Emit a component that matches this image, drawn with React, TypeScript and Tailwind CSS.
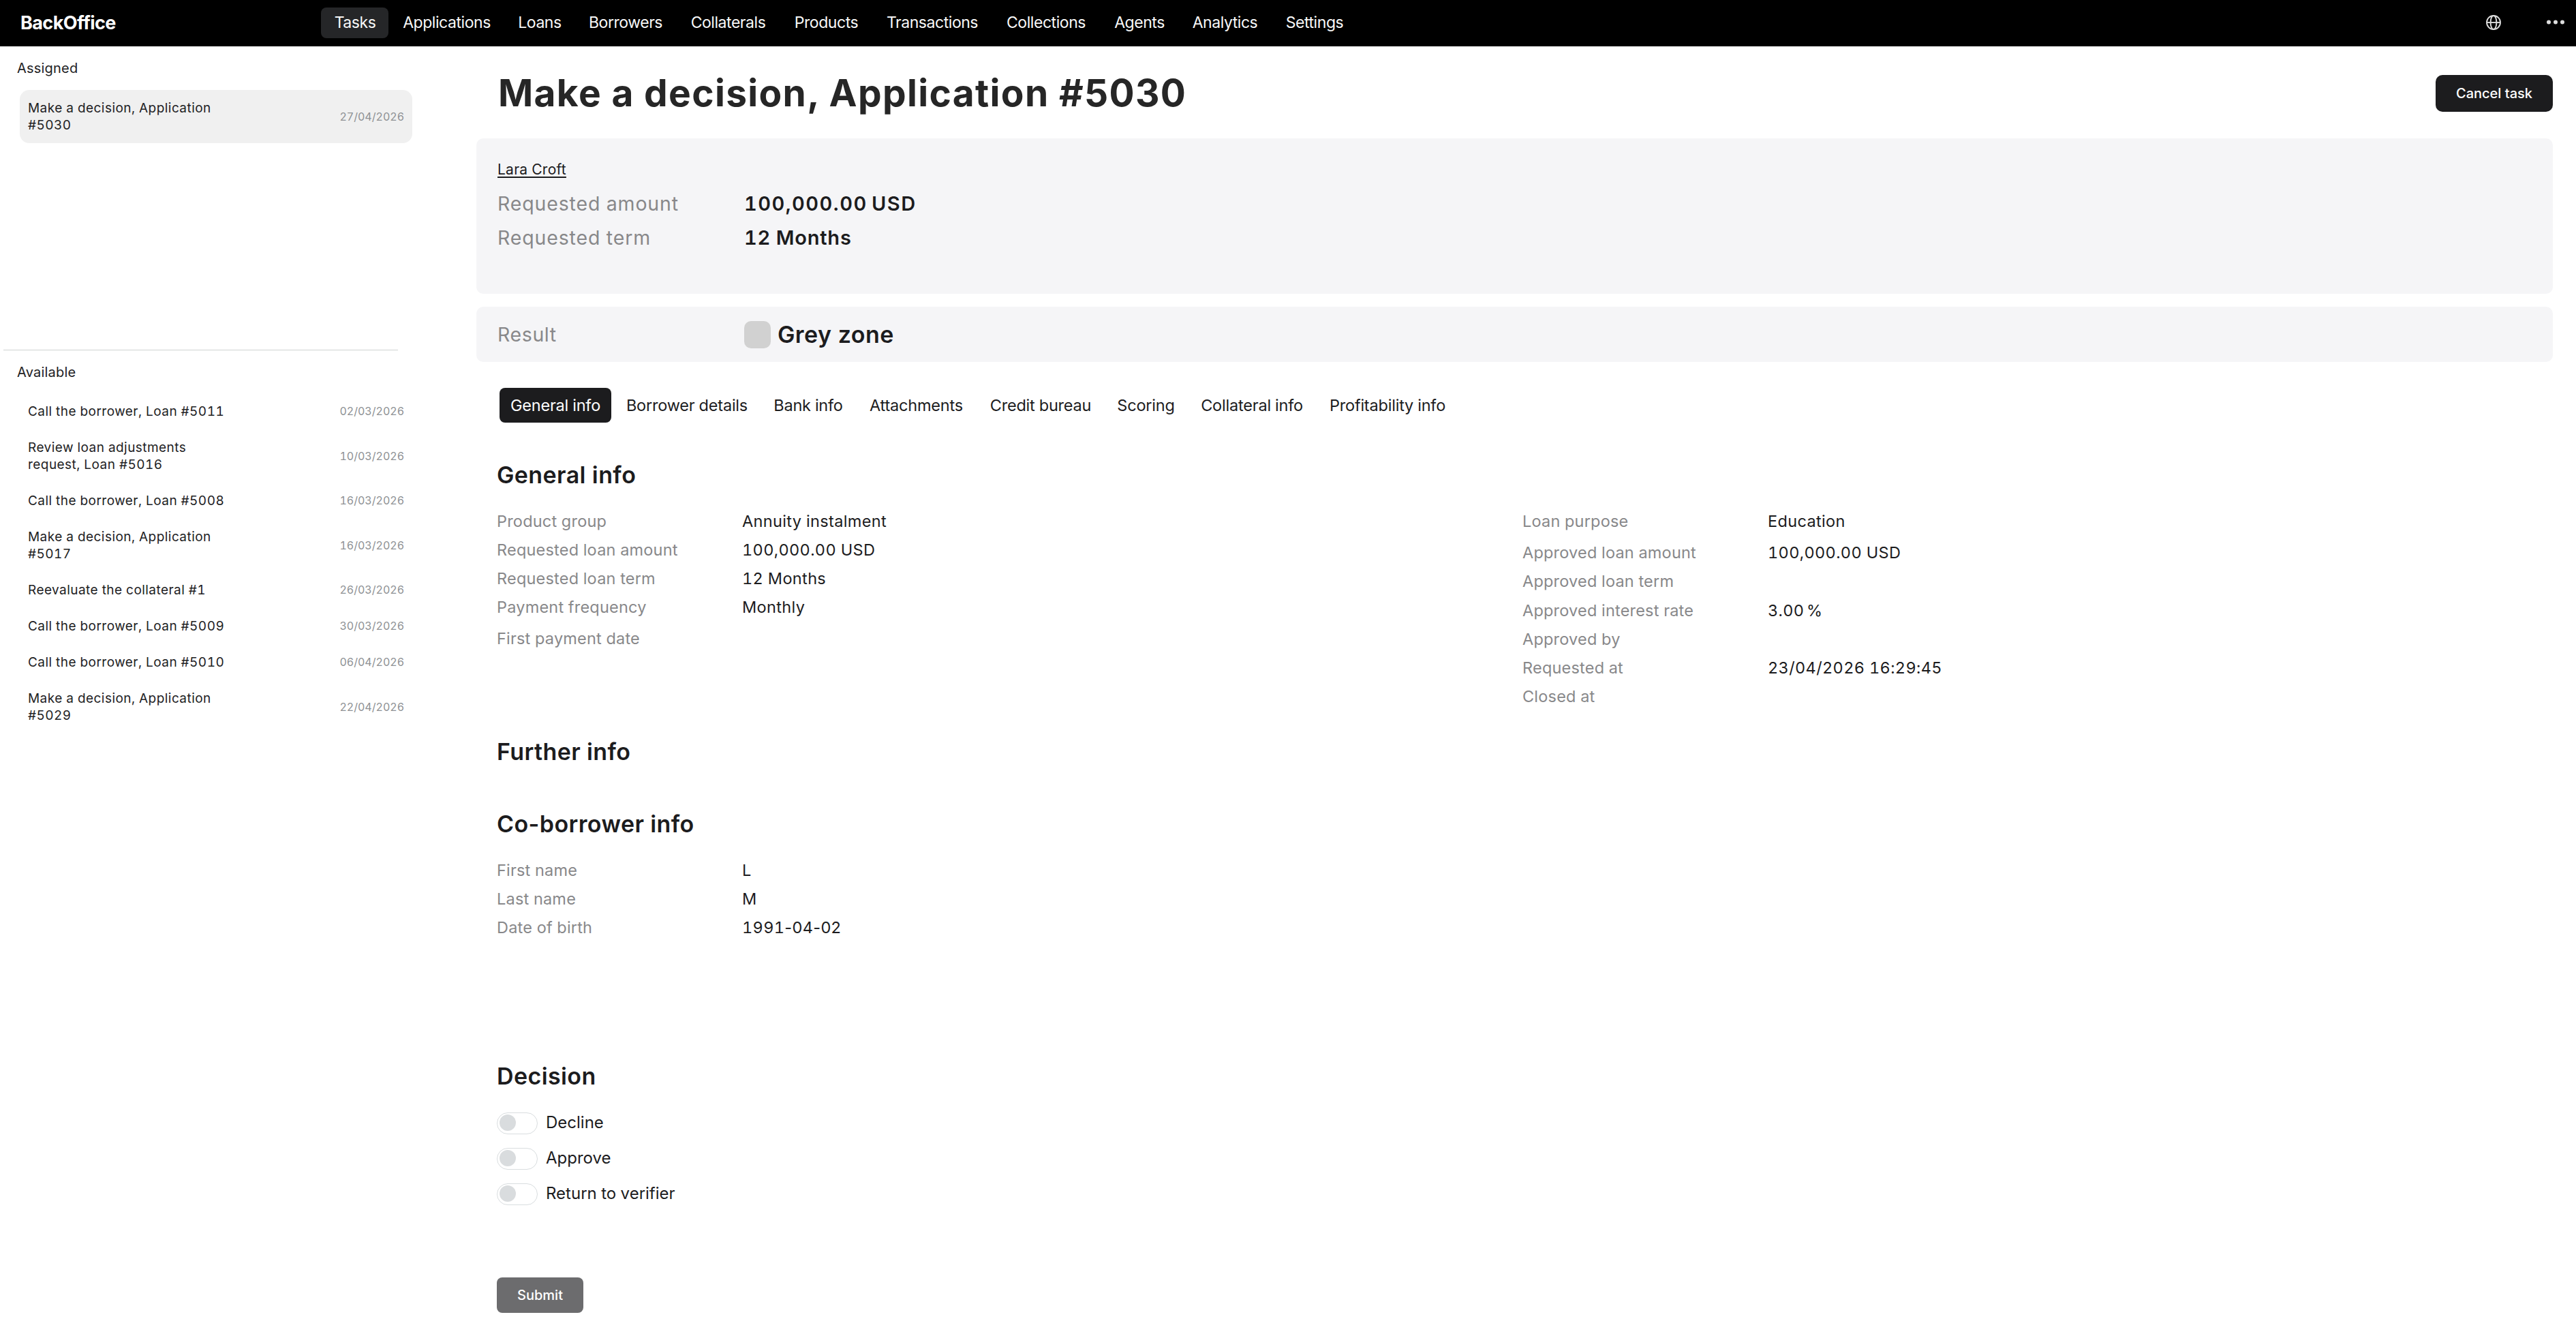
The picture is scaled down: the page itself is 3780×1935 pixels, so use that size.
import React, { useState } from "react";
import clsx from "clsx";

const navItems = [
  { label: "Tasks", width: "w-[99px]" },
  { label: "Applications", width: "w-[170px]" },
  { label: "Loans", width: "w-[103px]" },
  { label: "Borrowers", width: "w-[149px]" },
  { label: "Collaterals", width: "w-[152px]" },
  { label: "Products", width: "w-[136px]" },
  { label: "Transactions", width: "w-[175px]" },
  { label: "Collections", width: "w-[159px]" },
  { label: "Agents", width: "w-[115px]" },
  { label: "Analytics", width: "w-[136px]" },
  { label: "Settings", width: "w-[127px]" },
];

const assignedTasks = [
  { title: "Make a decision, Application #5030", date: "27/04/2026" },
];

const availableTasks = [
  { title: "Call the borrower, Loan #5011", date: "02/03/2026" },
  { title: "Review loan adjustments request, Loan #5016", date: "10/03/2026" },
  { title: "Call the borrower, Loan #5008", date: "16/03/2026" },
  { title: "Make a decision, Application #5017", date: "16/03/2026" },
  { title: "Reevaluate the collateral #1", date: "26/03/2026" },
  { title: "Call the borrower, Loan #5009", date: "30/03/2026" },
  { title: "Call the borrower, Loan #5010", date: "06/04/2026" },
  { title: "Make a decision, Application #5029", date: "22/04/2026" },
];

const tabs = [
  { label: "General info", width: "w-[164px] mr-[2px]" },
  { label: "Borrower details", width: "w-[217px]" },
  { label: "Bank info", width: "w-[139px]" },
  { label: "Attachments", width: "w-[178px]" },
  { label: "Credit bureau", width: "w-[187px]" },
  { label: "Scoring", width: "w-[122px]" },
  { label: "Collateral info", width: "w-[189px]" },
  { label: "Profitability info", width: "w-[209px]" },
];

const decisions = ["Decline", "Approve", "Return to verifier"];

const TaskItem = ({
  title,
  date,
  active,
}: {
  title: string;
  date: string;
  active?: boolean;
}) => (
  <li
    className={clsx(
      "ml-[29px] flex w-[576px] items-center justify-between rounded-[14px] py-[14px] pr-[12px] pl-[12px]",
      active && "bg-[#f0f0f0]",
    )}
  >
    <span className="w-[300px] text-[19px] leading-[25px] tracking-[0.45px] text-[#222224]">
      {title}
    </span>
    <span className="-mt-px text-[16px] leading-5 text-[#8e9194]">{date}</span>
  </li>
);

const Field = ({
  label,
  value,
  className,
}: {
  label: string;
  value?: React.ReactNode;
  className?: string;
}) => (
  <div
    className={clsx(
      "grid h-[42px] grid-cols-[360px_1fr] items-center text-[23.5px]",
      className,
    )}
  >
    <span className="tracking-[0.2px] text-[#88888a]">{label}</span>
    <span className="tracking-[0.35px] text-[#1c1c1e]">{value}</span>
  </div>
);

const SectionTitle = ({
  children,
  className,
}: {
  children: React.ReactNode;
  className?: string;
}) => (
  <h2
    className={clsx(
      "h-[50px] text-[34px] leading-[50px] font-semibold tracking-[0.4px] text-[#1c1c1e] normal-nums",
      className,
    )}
  >
    {children}
  </h2>
);

const Toggle = ({
  label,
  checked,
  onChange,
}: {
  label: string;
  checked: boolean;
  onChange: () => void;
}) => (
  <button
    role="switch"
    aria-checked={checked}
    onClick={onChange}
    className="flex h-8 items-center gap-[12px]"
  >
    <span
      className={clsx(
        "flex h-8 w-[60px] rounded-full border border-[#d9dddf] px-[3px] pt-[2px]",
        checked && "justify-end",
      )}
    >
      <span className="size-6 rounded-full bg-[#d9dcde]" />
    </span>
    <span className="-mt-[2px] text-[24px] leading-[30px] text-[#1c1c1e]">
      {label}
    </span>
  </button>
);

const Navbar = () => (
  <header className="flex h-[68px] items-start bg-black text-[#f8f8f8]">
    <div className="h-[68px] w-[471px] pl-[30px] text-[27px] leading-[67px] font-bold tracking-[-0.6px] text-white">
      BackOffice
    </div>
    <nav className="mt-[11px] flex">
      {navItems.map(({ label, width }, i) => (
        <a
          key={label}
          className={clsx(
            "flex h-[45px] items-center justify-center pl-px text-[23px] tracking-[-0.45px] whitespace-nowrap",
            width,
            i === 0 && "rounded-lg bg-[#252628]",
          )}
        >
          {label}
        </a>
      ))}
    </nav>
    <div className="mt-[22px] ml-auto flex pr-[17px] text-[#dcdcdc]">
      <svg width="22" height="22" viewBox="0 0 22 22" fill="none" stroke="currentColor" strokeWidth="1.9">
        <circle cx="11" cy="11" r="10" />
        <ellipse cx="11" cy="11" rx="4.4" ry="10" />
        <path d="M1 11h20" />
      </svg>
      <svg className="ml-[67px]" width="26" height="22" viewBox="0 0 26 22" fill="currentColor">
        <circle cx="3" cy="10.5" r="3" />
        <circle cx="13" cy="10.5" r="3" />
        <circle cx="23" cy="10.5" r="3" />
      </svg>
    </div>
  </header>
);

const Sidebar = () => (
  <aside className="w-[699px] shrink-0">
    <h3 className="mt-[17px] ml-[25px] h-[30px] text-[20px] leading-[30px] tracking-[0.2px] text-[#222224]">
      Assigned
    </h3>
    <ul className="mt-[17px] h-[381px]">
      {assignedTasks.map((task) => (
        <TaskItem key={task.title} {...task} active />
      ))}
    </ul>
    <div className="ml-[5px] h-px w-[579px] bg-[#cfd3d1]" />
    <h3 className="mt-[17px] ml-[25px] h-[30px] text-[20px] leading-[30px] tracking-[0.2px] text-[#222224]">
      Available
    </h3>
    <ul className="mt-[16px]">
      {availableTasks.map((task) => (
        <TaskItem key={task.title} {...task} />
      ))}
    </ul>
  </aside>
);

export default function App() {
  const [tab, setTab] = useState("General info");
  const [decision, setDecision] = useState<string | null>(null);

  return (
    <div className="h-[1935px] w-[3780px] overflow-hidden bg-white font-['Inter','Liberation_Sans',sans-serif] tabular-nums">
      <Navbar />
      <div className="flex">
        <Sidebar />
        <main className="w-[3047px]">
          <div className="flex h-[135px] items-center justify-between pl-8">
            <h1 className="mt-px text-[55px] leading-[64px] font-bold tracking-[1.35px] text-[#262626] normal-nums">
              Make a decision, Application #5030
            </h1>
            <button className="mt-[3px] h-[54px] w-[172px] rounded-[10px] bg-[#1c1c1e] text-[20px] font-medium text-white">
              Cancel task
            </button>
          </div>

          <section className="h-[228px] rounded-[10px] bg-[#f5f5f7] pt-[31px] pl-[31px]">
            <a className="block h-[30px] text-[21px] leading-[30px] tracking-[0.25px] text-[#1c1c1e] underline decoration-2 underline-offset-[3px]">
              Lara Croft
            </a>
            <div className="mt-[10px] grid grid-cols-[362px_1fr] text-[28.5px] leading-[50px]">
              <span className="tracking-[0.85px] text-[#88888a]">Requested amount</span>
              <span className="text-[29px] font-semibold tracking-[1.5px] text-[#1c1c1e] [word-spacing:-3px]">
                100,000.00 USD
              </span>
              <span className="tracking-[0.85px] text-[#88888a]">Requested term</span>
              <span className="text-[29px] font-semibold tracking-[0.8px] text-[#1c1c1e] [word-spacing:-1px]">
                12 Months
              </span>
            </div>
          </section>

          <section className="mt-[19px] grid h-[81px] grid-cols-[362px_1fr] items-center rounded-[10px] bg-[#f5f5f7] pl-[31px]">
            <span className="mt-[2px] text-[28.5px] tracking-[0.6px] text-[#88888a]">Result</span>
            <span className="flex items-center gap-[10px]">
              <span className="h-10 w-[39px] rounded-[10px] bg-[#d1d1d1]" />
              <span className="mt-px text-[34px] leading-10 font-semibold tracking-[0.4px] text-[#1c1c1e]">
                Grey zone
              </span>
            </span>
          </section>

          <div className="mt-[38px] ml-[34px] flex">
            {tabs.map(({ label, width }) => (
              <button
                key={label}
                onClick={() => setTab(label)}
                className={clsx(
                  "h-[51px] rounded-lg text-[23.5px] tracking-[-0.2px] whitespace-nowrap",
                  width,
                  tab === label ? "bg-[#1c1c1e] text-white" : "pl-px text-[#1c1c1e]",
                )}
              >
                {label}
              </button>
            ))}
          </div>

          <div className="ml-[30px]">
            <SectionTitle className="mt-[52px]">General info</SectionTitle>
            <div className="mt-[22px] grid h-[306px] grid-cols-[1505px_1fr]">
              <div>
                <Field label="Product group" value="Annuity instalment" />
                <Field label="Requested loan amount" value="100,000.00 USD" />
                <Field label="Requested loan term" value="12 Months" />
                <Field label="Payment frequency" value="Monthly" />
                <Field label="First payment date" className="mt-1" />
              </div>
              <div>
                <Field label="Loan purpose" value="Education" />
                <Field label="Approved loan amount" value="100,000.00 USD" className="mt-1" />
                <Field label="Approved loan term" />
                <Field
                  label="Approved interest rate"
                  value={<span className="[word-spacing:-3px]">3.00 %</span>}
                  className="mt-px"
                />
                <Field label="Approved by" />
                <Field label="Requested at" value="23/04/2026 16:29:45" />
                <Field label="Closed at" />
              </div>
            </div>

            <SectionTitle className="mt-[28px]">Further info</SectionTitle>
            <SectionTitle className="mt-[56px]">Co-borrower info</SectionTitle>
            <div className="mt-[22px]">
              <Field label="First name" value="L" />
              <Field label="Last name" value="M" />
              <Field
                label="Date of birth"
                value={
                  <>
                    <span>1991</span>
                    <span className="normal-nums">-04-02</span>
                  </>
                }
              />
            </div>

            <SectionTitle className="mt-[172px]">Decision</SectionTitle>
            <div className="mt-[28px] flex flex-col items-start gap-5">
              {decisions.map((item) => (
                <Toggle
                  key={item}
                  label={item}
                  checked={decision === item}
                  onChange={() => setDecision(decision === item ? null : item)}
                />
              ))}
            </div>

            <button
              disabled={!decision}
              className="mt-[106px] h-[52px] w-[127px] rounded-lg bg-[#1c1c1e] text-[20px] font-medium text-white disabled:bg-[#6c6c6e]"
            >
              Submit
            </button>
          </div>
        </main>
      </div>
    </div>
  );
}
